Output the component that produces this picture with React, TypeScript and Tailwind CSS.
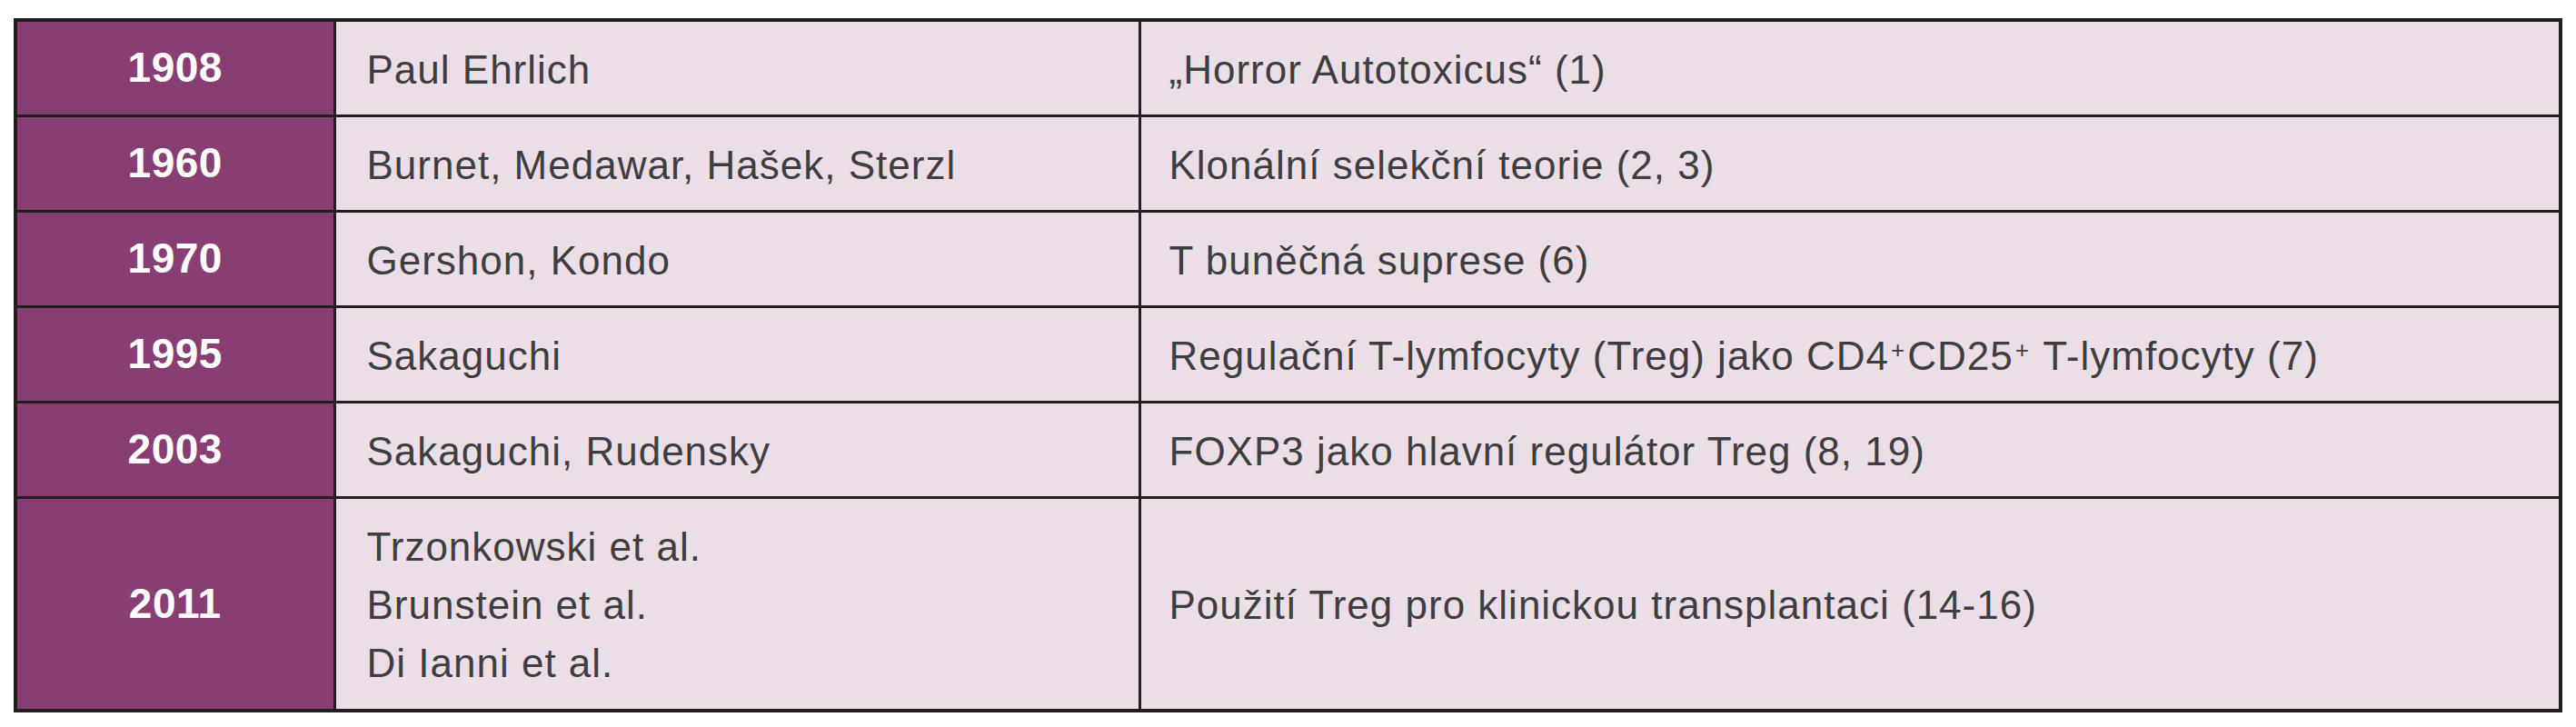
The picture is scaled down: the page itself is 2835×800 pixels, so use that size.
const rows: { year: string; names: string[]; text: React.ReactNode; tall?: boolean }[] = [
  { year: "1908", names: ["Paul Ehrlich"], text: "„Horror Autotoxicus“ (1)" },
  { year: "1960", names: ["Burnet, Medawar, Hašek, Sterzl"], text: "Klonální selekční teorie (2, 3)" },
  { year: "1970", names: ["Gershon, Kondo"], text: "T buněčná suprese (6)" },
  {
    year: "1995",
    names: ["Sakaguchi"],
    text: (
      <>
        Regulační T-lymfocyty (Treg) jako CD4<sup className="text-[26px] mx-[2px]">+</sup>CD25<sup className="text-[26px] mx-[2px]">+</sup> T-lymfocyty (7)
      </>
    ),
  },
  { year: "2003", names: ["Sakaguchi, Rudensky"], text: "FOXP3 jako hlavní regulátor Treg (8, 19)" },
  {
    year: "2011",
    names: ["Trzonkowski et al.", "Brunstein et al.", "Di Ianni et al."],
    text: "Použití Treg pro klinickou transplantaci (14-16)",
    tall: true,
  },
];

export default function App() {
  return (
    <div className="w-[2835px] h-[800px] bg-white pt-[20px] pl-[15px] font-['Liberation_Sans',Arial,sans-serif]">
      <table className="w-[2805px] border-collapse border-[4px] border-[#231f20] table-fixed">
        <colgroup>
          <col className="w-[351px]" />
          <col className="w-[886px]" />
          <col />
        </colgroup>
        <tbody>
          {rows.map((r) => (
            <tr key={r.year} className={r.tall ? "h-[235px]" : "h-[105px]"}>
              <td className="border-[3px] border-[#231f20] bg-[#883e73] text-center text-white font-bold text-[46px] tracking-[0.5px]">
                {r.year}
              </td>
              <td className="border-[3px] border-[#231f20] bg-[#ebdee7] pl-[34px] pt-[4px] text-[#3e3d40] text-[44px] tracking-[1px]">
                {r.names.map((n) => (
                  <div key={n} className="leading-[64px]">
                    {n}
                  </div>
                ))}
              </td>
              <td className="border-[3px] border-[#231f20] bg-[#ebdee7] pl-[31px] pt-[4px] text-[#3e3d40] text-[44px] tracking-[1px]">
                {r.text}
              </td>
            </tr>
          ))}
        </tbody>
      </table>
    </div>
  );
}
